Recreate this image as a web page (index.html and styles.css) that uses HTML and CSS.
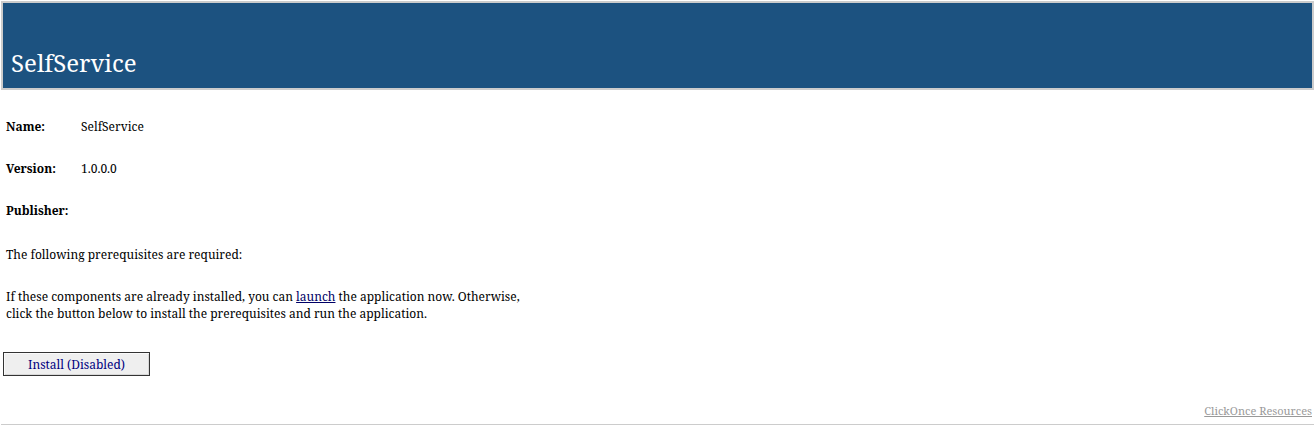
FILE: index.html
```html
<!DOCTYPE html>
<html>
<head>
<meta charset="utf-8">
<title>SelfService</title>
<link rel="stylesheet" href="styles.css">
</head>
<body>
<div class="page">
  <div class="banner-frame">
    <div class="banner">
      <div class="app-title">SelfService</div>
    </div>
  </div>
  <div class="content">
    <div class="info-row"><span class="label">Name:</span><span class="value">SelfService</span></div>
    <div class="info-row"><span class="label">Version:</span><span class="value">1.0.0.0</span></div>
    <div class="info-row info-row-last"><span class="label">Publisher:</span><span class="value"></span></div>
    <p class="para">The following prerequisites are required:</p>
    <p class="para para-last">If these components are already installed, you can <a class="launch" href="#">launch</a> the application now. Otherwise,<br>click the button below to install the prerequisites and run the application.</p>
    <div class="button-row"><button class="install-btn" type="button">Install (Disabled)</button></div>
  </div>
  <div class="footer">
    <a class="resources" href="#">ClickOnce Resources</a>
  </div>
  <div class="footer-rule"></div>
</div>
</body>
</html>
```

FILE: styles.css
```css
html, body {
  margin: 0;
  padding: 0;
  background: #ffffff;
}
body {
  font-family: "Noto Serif", "DejaVu Serif Condensed", serif;
  color: #000000;
  font-size: 12px;
}
.page {
  padding: 1px 1px 0 1px;
  display: flex;
  flex-direction: column;
}
.banner-frame {
  border: 2px solid #cccccc;
}
.banner {
  background: #1c5280;
  height: 85px;
  display: flex;
  align-items: flex-end;
  padding-left: 8px;
  box-sizing: border-box;
  padding-bottom: 11px;
}
.app-title {
  color: #ffffff;
  font-size: 24px;
  line-height: 28px;
}
.content {
  padding: 0 0 0 5px;
  margin-top: 28px;
}
.info-row {
  display: flex;
  height: 42px;
  line-height: 18px;
}
.info-row-last {
  height: 44px;
}
.label {
  font-weight: bold;
  width: 75px;
}
.para {
  margin: 0 0 25px 0;
  line-height: 17px;
}
.para-last {
  margin-bottom: 0;
}
.launch {
  color: #000066;
  text-decoration: underline;
}
.button-row {
  margin-top: 30px;
  margin-left: -3px;
  display: flex;
}
.install-btn {
  width: 147px;
  height: 24px;
  font-family: "Noto Serif", "DejaVu Serif Condensed", serif;
  font-size: 12px;
  color: #000080;
  background: #efefef;
  border: 1px solid #333333;
  box-shadow: inset 1px 1px 0 #fafafa, inset -1px -1px 0 #d8d8d8;
  padding: 0;
}
.footer {
  display: flex;
  justify-content: flex-end;
  margin-top: 26px;
  padding-right: 2px;
  line-height: 18px;
}
.resources {
  color: #999999;
  font-size: 11px;
  text-decoration: underline;
}
.footer-rule {
  margin-top: 4px;
  border-top: 1px solid #cccccc;
}
```
